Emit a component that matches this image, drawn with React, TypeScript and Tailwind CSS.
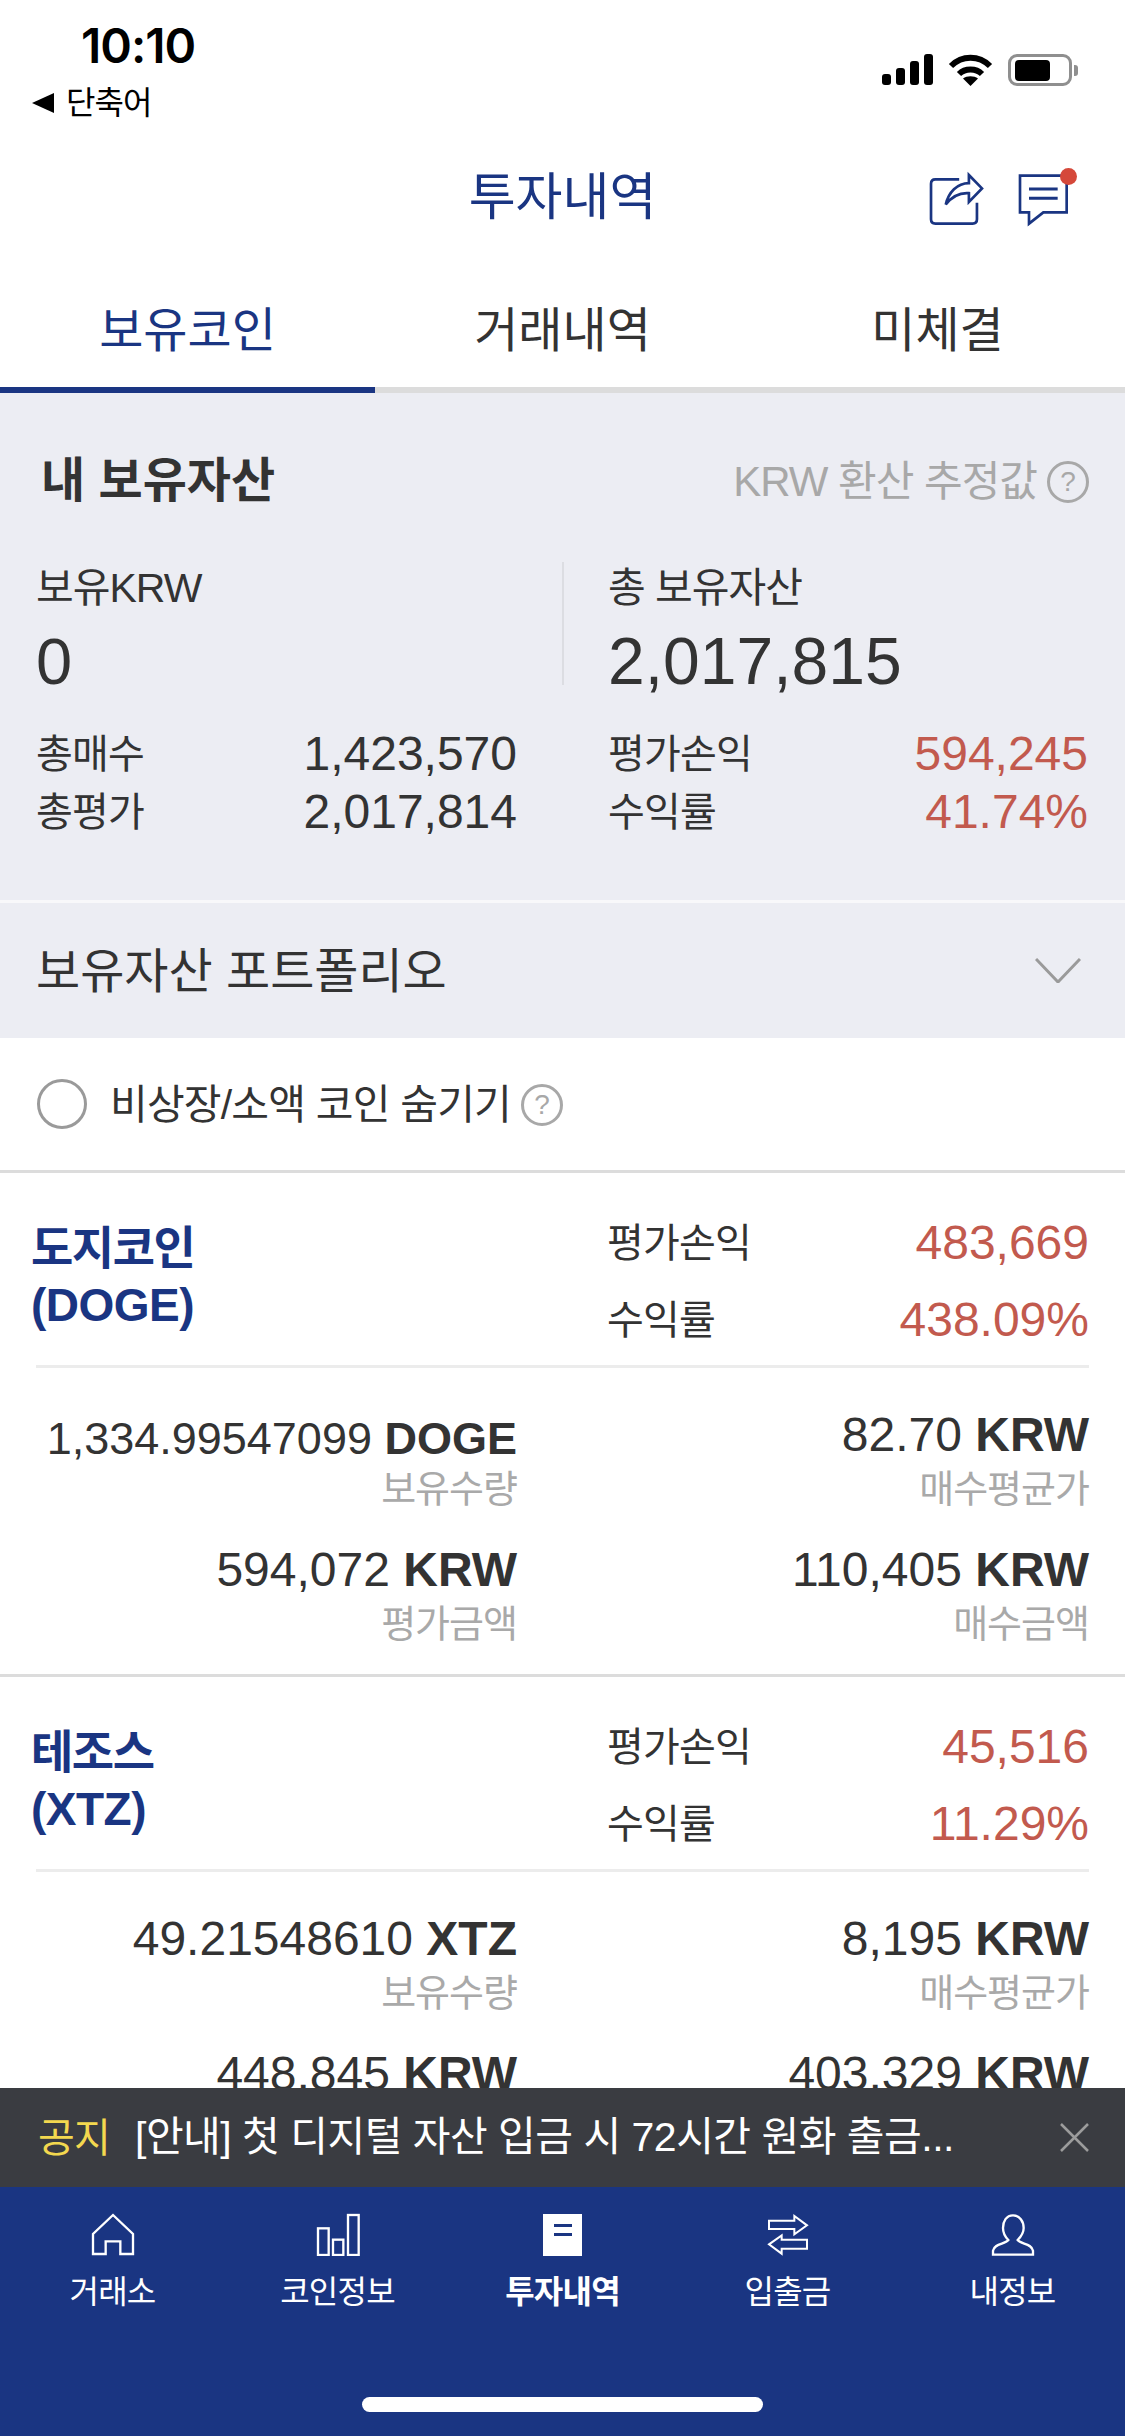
const navy = "text-[#1a3582]";

function HelpIcon({ className }: { className: string }) {
  return (
    <span className={`flex items-center justify-center rounded-full border-[3px] border-[#a8a8a8] text-[#a8a8a8] ${className}`}>
      ?
    </span>
  );
}

function StatusIcons() {
  return (
    <div className="flex items-start gap-[15px] pt-[54px] pr-[47px]">
      {/* signal */}
      <svg width="51" height="31" viewBox="0 0 51 31" fill="#000">
        <rect x="0" y="20" width="9" height="11" rx="3" />
        <rect x="14" y="14" width="9" height="17" rx="3" />
        <rect x="28" y="7" width="9" height="24" rx="3" />
        <rect x="42" y="0" width="9" height="31" rx="3" />
      </svg>
      {/* wifi */}
      <svg width="45" height="32" viewBox="0 0 45 32" fill="none" stroke="#000" strokeWidth="6">
        <path d="M3 12 C14 1 31 1 42 12" />
        <path d="M11 20 C17 14 28 14 34 20" />
        <path d="M22.5 32 L15 24.5 C19 21.5 26 21.5 30 24.5 Z" fill="#000" stroke="none" />
      </svg>
      {/* battery */}
      <div className="flex items-center">
        <div className="flex h-[32px] w-[64px] items-center rounded-[9px] border-[3px] border-[#8f8f8f] pl-[4px]">
          <div className="h-[21px] w-[35px] rounded-[4px] bg-black" />
        </div>
        <div className="ml-[2px] h-[11px] w-[4px] rounded-r-[3px] bg-[#8f8f8f]" />
      </div>
    </div>
  );
}

function ShareIcon() {
  return (
    <svg width="57" height="57" viewBox="85 60 170 170" fill="none" stroke="#1a3582" strokeWidth="8">
      <path d="M178 85 H107 Q94 85 94 98 V204 Q94 217 107 217 H218 Q231 217 231 204 V155" />
      <path d="M207 72 L246 112 L207 152 V126 C180 124 156 136 138 160 C146 124 172 96 207 96 Z" strokeLinejoin="miter" />
    </svg>
  );
}

function ChatIcon() {
  return (
    <div className="relative h-[57px] w-[54px]">
      <svg width="54" height="57" viewBox="355 60 162 171" fill="none" stroke="#1a3582">
        <path d="M364 74 H504 V184 H434 L391 218 V184 H364 Z" strokeWidth="8" />
        <path d="M391 114 H477 M391 142 H477" strokeWidth="9" />
      </svg>
      <span className="absolute right-[-6px] top-[-3px] h-[17px] w-[17px] rounded-full bg-[#d5483a]" />
    </div>
  );
}

function HomeIcon() {
  return (
    <svg width="44" height="43" viewBox="90 35 132 129" fill="none" stroke="#fff" strokeWidth="7">
      <path d="M156 41 L216 98 V158 H178 V120 H134 V158 H96 V98 Z" />
    </svg>
  );
}

function BarsIcon() {
  return (
    <svg width="44" height="43" viewBox="765 33 132 129" fill="none" stroke="#fff" strokeWidth="7">
      <rect x="771" y="79" width="32" height="80" />
      <rect x="816" y="113" width="31" height="46" />
      <rect x="861" y="39" width="32" height="120" />
    </svg>
  );
}

function DocIcon() {
  return (
    <div className="flex h-[43px] w-[44px] items-center justify-center">
      <div className="flex h-[42px] w-[39px] flex-col items-center gap-[6px] bg-white pt-[10px]">
        <span className="h-[3px] w-[18px] bg-[#1a3582]" />
        <span className="h-[3px] w-[18px] bg-[#1a3582]" />
      </div>
    </div>
  );
}

function TransferIcon() {
  return (
    <svg width="44" height="43" viewBox="735 33 132 129" fill="none" stroke="#fff" strokeWidth="6">
      <path d="M744 56 H820 V42 L858 70 L820 97 V81 H744 Z" />
      <path d="M858 113 H782 V100 L744 127 L782 155 V140 H858 Z" />
    </svg>
  );
}

function UserIcon() {
  return (
    <svg width="44" height="43" viewBox="1410 33 132 129" fill="none" stroke="#fff" strokeWidth="7">
      <path d="M1476 40 C1456 40 1446 58 1446 78 C1446 94 1454 106 1462 114 C1452 127 1420 124 1416 146 V158 H1536 V146 C1532 124 1500 127 1490 114 C1498 106 1508 94 1508 78 C1508 58 1496 40 1476 40 Z" />
    </svg>
  );
}

const navItems = [
  { label: "거래소", icon: <HomeIcon /> },
  { label: "코인정보", icon: <BarsIcon /> },
  { label: "투자내역", icon: <DocIcon />, active: true },
  { label: "입출금", icon: <TransferIcon /> },
  { label: "내정보", icon: <UserIcon /> },
];

function PairRow({ label, value, big }: { label: string; value: string; big?: boolean }) {
  return (
    <div className={`flex items-center justify-between ${big ? "h-[77px]" : "h-[58px]"}`}>
      <span className="text-[40px] tracking-[-0.8px] text-[#333]">{label}</span>
      <span className="text-[48px] text-[#c25a4e]">{value}</span>
    </div>
  );
}

function Amount({ value, unit, label, small }: { value: string; unit: string; label: string; small?: boolean }) {
  return (
    <div className="flex flex-col items-end">
      <div className={`h-[50px] leading-[50px] text-[#333] ${small ? "mt-[4px] mb-[-4px] text-[45px]" : "text-[48px]"}`}>
        {value} <span className="font-bold">{unit}</span>
      </div>
      <div className="mt-[4px] text-[38px] leading-[50px] tracking-[-1px] text-[#a9a9a9]">{label}</div>
    </div>
  );
}

type Coin = {
  name: string;
  symbol: string;
  pnl: string;
  rate: string;
  qty: string;
  avg: string;
  evalAmt: string;
  buyAmt: string;
  smallQty?: boolean;
};

const coins: Coin[] = [
  { name: "도지코인", symbol: "DOGE", pnl: "483,669", rate: "438.09%", qty: "1,334.99547099", avg: "82.70", evalAmt: "594,072", buyAmt: "110,405", smallQty: true },
  { name: "테조스", symbol: "XTZ", pnl: "45,516", rate: "11.29%", qty: "49.21548610", avg: "8,195", evalAmt: "448,845", buyAmt: "403,329" },
];

function CoinCard({ coin }: { coin: Coin }) {
  return (
    <div className="h-[504px] shrink-0 border-b-[3px] border-[#dcdcdc]">
      <div className="mx-[36px] flex h-[195px] border-b-[3px] border-[#ececec]">
        <div className={`w-[571px] shrink-0 pt-[47px] text-[46px] font-bold leading-[57px] ${navy}`}>
          <div className="ml-[-5px] tracking-[-1.5px]">{coin.name}</div>
          <div className="ml-[-5px] tracking-[-0.5px]">({coin.symbol})</div>
        </div>
        <div className="flex-1 pt-[31px]">
          <PairRow big label="평가손익" value={coin.pnl} />
          <PairRow big label="수익률" value={coin.rate} />
        </div>
      </div>
      <div className="mx-[36px] grid grid-cols-[481px_479px] gap-x-[93px] gap-y-[31px] pt-[42px]">
        <Amount value={coin.qty} unit={coin.symbol} label="보유수량" small={coin.smallQty} />
        <Amount value={coin.avg} unit="KRW" label="매수평균가" />
        <Amount value={coin.evalAmt} unit="KRW" label="평가금액" />
        <Amount value={coin.buyAmt} unit="KRW" label="매수금액" />
      </div>
    </div>
  );
}

export default function App() {
  return (
    <div className="flex h-[2436px] w-[1125px] flex-col overflow-hidden bg-white font-['Liberation_Sans','Noto_Sans_CJK_KR',sans-serif] text-[#333]">
      {/* status bar */}
      <div className="flex h-[138px] shrink-0 justify-between">
        <div className="pl-[32px] pt-[18px]">
          <div className="pl-[49px] font-['Inter',sans-serif] text-[48px] font-semibold leading-[56px] tracking-[-1px] text-black">10:10</div>
          <div className="mt-[9px] flex h-[40px] items-center gap-[12px] text-black">
            <span className="h-0 w-0 border-y-[10px] border-r-[22px] border-y-transparent border-r-black" />
            <span className="text-[32px] tracking-[-1px]">단축어</span>
          </div>
        </div>
        <StatusIcons />
      </div>

      {/* header */}
      <div className="grid h-[116px] shrink-0 grid-cols-3 items-center">
        <div />
        <div className={`pt-[5px] text-center text-[51px] ${navy}`}>투자내역</div>
        <div className="flex items-center justify-end gap-[32px] pr-[54px] pt-[7px]">
          <ShareIcon />
          <ChatIcon />
        </div>
      </div>

      {/* tabs */}
      <div className="flex h-[139px] shrink-0 border-b-[6px] border-[#dcdcdc]">
        <div className={`mb-[-6px] flex w-[375px] items-center justify-center border-b-[6px] border-[#1a3582] pt-[20px] text-[48px] ${navy}`}>보유코인</div>
        <div className="flex w-[375px] items-center justify-center pt-[20px] text-[48px]">거래내역</div>
        <div className="flex w-[375px] items-center justify-center pt-[20px] text-[48px]">미체결</div>
      </div>

      <div className="min-h-0 flex-1 overflow-hidden">
        {/* summary */}
        <div className="h-[510px] border-b-[3px] border-[#f8f8fa] bg-[#ecedf3]">
          <div className="flex h-[169px] items-center justify-between pl-[41px] pr-[36px] pt-[6px]">
            <span className="text-[48px] font-bold">내 보유자산</span>
            <div className="flex items-center gap-[10px] pt-[2px] text-[#a8a8a8]">
              <span className="text-[42px] tracking-[-1px]">KRW 환산 추정값</span>
              <HelpIcon className="h-[42px] w-[42px] text-[28px]" />
            </div>
          </div>
          <div className="flex h-[123px]">
            <div className="w-[562px] pl-[36px]">
              <div className="pt-[1px] text-[41px] leading-[50px] tracking-[-1px]">보유KRW</div>
              <div className="mt-[11px] text-[65px] leading-[75px]">0</div>
            </div>
            <div className="w-[46px] border-l-2 border-[#dcdde2]" />
            <div>
              <div className="pt-[1px] text-[41px] leading-[50px] tracking-[-1px]">총 보유자산</div>
              <div className="mt-[11px] text-[66px] leading-[75px]">2,017,815</div>
            </div>
          </div>
          <div className="mx-[36px] mt-[40px] grid grid-cols-[481px_480px] gap-x-[91px]">
            <div className="flex h-[58px] items-center justify-between">
              <span className="text-[40px] tracking-[-0.8px]">총매수</span>
              <span className="text-[48px]">1,423,570</span>
            </div>
            <PairRow label="평가손익" value="594,245" />
            <div className="flex h-[58px] items-center justify-between">
              <span className="text-[40px] tracking-[-0.8px]">총평가</span>
              <span className="text-[48px]">2,017,814</span>
            </div>
            <PairRow label="수익률" value="41.74%" />
          </div>
        </div>

        {/* portfolio */}
        <div className="flex h-[135px] items-center justify-between bg-[#ecedf3] pl-[36px] pr-[44px]">
          <span className="pt-[2px] text-[48px]">보유자산 포트폴리오</span>
          <svg width="46" height="25" viewBox="0 0 46 25" fill="none" stroke="#9a9a9a" strokeWidth="3">
            <path d="M1 1 L23 24 L45 1" />
          </svg>
        </div>

        {/* hide small coins */}
        <div className="flex h-[135px] items-center border-b-[3px] border-[#dcdcdc] pl-[37px]">
          <span className="h-[50px] w-[50px] rounded-full border-[3px] border-[#9a9a9a]" />
          <span className="ml-[23px] pt-[3px] text-[41px] tracking-[-0.8px]">비상장/소액 코인 숨기기</span>
          <HelpIcon className="ml-[10px] mt-[2px] h-[42px] w-[42px] text-[28px]" />
        </div>

        {coins.map((coin) => (
          <CoinCard key={coin.symbol} coin={coin} />
        ))}
      </div>

      {/* notice */}
      <div className="flex h-[99px] shrink-0 items-center bg-[#3a3c41] pl-[38px] pr-[36px]">
        <span className="text-[40px] tracking-[-0.8px] text-[#f3d84f]">공지</span>
        <span className="ml-[25px] flex-1 text-[41px] tracking-[-0.5px] text-white">[안내] 첫 디지털 자산 입금 시 72시간 원화 출금...</span>
        <svg width="29" height="29" viewBox="0 0 29 29" stroke="#9c9c9c" strokeWidth="2.5">
          <path d="M1 1 L28 28 M28 1 L1 28" />
        </svg>
      </div>

      {/* bottom nav */}
      <div className="flex h-[249px] shrink-0 flex-col bg-[#1a3582]">
        <div className="grid grid-cols-5 pt-[26px]">
          {navItems.map((item) => (
            <div key={item.label} className="flex flex-col items-center text-white">
              {item.icon}
              <span className={`mt-[16px] text-[32px] leading-[40px] tracking-[-0.8px] ${item.active ? "font-bold" : ""}`}>{item.label}</span>
            </div>
          ))}
        </div>
        <div className="mx-auto mt-auto mb-[24px] h-[15px] w-[401px] rounded-full bg-white" />
      </div>
    </div>
  );
}
